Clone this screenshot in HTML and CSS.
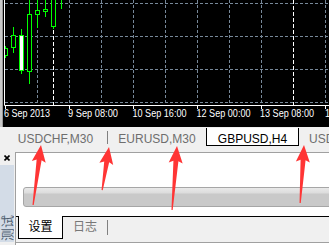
FILE: index.html
```html
<!DOCTYPE html>
<html>
<head>
<meta charset="utf-8">
<link rel="stylesheet" href="styles.css">
</head>
<body>
<div class="page">
  <div class="chart">
    <div class="chart-edge"></div>
    <svg class="chart-svg" width="325" height="127" viewBox="4 0 325 127">
      <rect x="4" y="0" width="325" height="127" fill="#000"/>
      <g stroke="#778899" stroke-width="1" stroke-dasharray="3 2" fill="none">
        <path d="M5 3.5H329M5 36.5H329M5 69.5H329M5 102.5H329"/>
        <path d="M37.5 0V105M69.5 0V105M101.5 0V105M133.5 0V105M165.5 0V105M197.5 0V105M229.5 0V105M261.5 0V105M325.5 0V105"/>
      </g>
      <g stroke="#fff" stroke-width="1" stroke-dasharray="4 2" fill="none">
        <path d="M53.5 0V105M293.5 0V105"/>
      </g>
      <g stroke="#00ff00" stroke-width="1">
        <path d="M5.5 46V58M13.5 27V53M21.5 29V74M29.5 0V84M37.5 0V28M45.5 0V17M53.5 0V29M61.5 0V9"/>
        <rect x="3.5" y="48.5" width="4" height="7" fill="#000"/>
        <rect x="11.5" y="35.5" width="4" height="12" fill="#000"/>
        <rect x="19.5" y="35.5" width="4" height="35" fill="#fff"/>
        <rect x="27.5" y="14.5" width="4" height="57" fill="#000"/>
        <rect x="35.5" y="10.5" width="4" height="4" fill="#000"/>
        <rect x="43.5" y="9.5" width="4" height="2" fill="#000"/>
        <rect x="51.5" y="-0.5" width="4" height="27" fill="#000"/>
      </g>
      <path d="M4.5 0V105.5H329" stroke="#fff" stroke-width="1" fill="none"/>
      <path d="M5.5 105V109M69.5 105V109M133.5 105V109M197.5 105V109M261.5 105V109M325.5 105V109" stroke="#fff" stroke-width="1"/>
      <g fill="#fff" font-family="Liberation Sans, Arial, sans-serif" font-size="10">
        <text x="4" y="117" textLength="46" lengthAdjust="spacingAndGlyphs">6 Sep 2013</text>
        <text x="68" y="117" textLength="50" lengthAdjust="spacingAndGlyphs">9 Sep 08:00</text>
        <text x="132.5" y="117" textLength="54" lengthAdjust="spacingAndGlyphs">10 Sep 16:00</text>
        <text x="196.5" y="117" textLength="54" lengthAdjust="spacingAndGlyphs">12 Sep 00:00</text>
        <text x="260" y="117" textLength="54" lengthAdjust="spacingAndGlyphs">13 Sep 08:00</text>
        <text x="325" y="117" textLength="54" lengthAdjust="spacingAndGlyphs">16 Sep 16:00</text>
      </g>
    </svg>
  </div>
  <div class="tabbar">
    <div class="tab t1">USDCHF,M30</div>
    <span class="sep"></span>
    <div class="tab t2">EURUSD,M30</div>
    <div class="tab active">GBPUSD,H4</div>
    <div class="tab t4">USDCHF,H1</div>
  </div>
  <div class="panel">
    <div class="side">
      <div class="close">
        <svg width="6" height="6" viewBox="0 0 6 6"><path d="M0.5 0.5L5.5 5.5M5.5 0.5L0.5 5.5" stroke="#000" stroke-width="1.6"/></svg>
      </div>
      <div class="side-tab"><span class="vtext">测试</span></div>
    </div>
    <div class="main">
      <div class="progress"></div>
      <div class="btabs">
        <div class="btab on">设置</div>
        <div class="btab">日志</div>
        <span class="bsep"></span>
      </div>
    </div>
  </div>
  <svg class="arrows" width="329" height="245" viewBox="0 0 329 245">
    <g fill="#ff3535">
      <path transform="translate(41 145) rotate(7.6)" d="M0 0L7 17L2.6 15L0.7 60.5L-0.5 60.5L-2.4 15L-7 17Z"/>
      <path transform="translate(109 147) rotate(9.2)" d="M0 0L7 17L2.6 15L0.7 43.6L-0.5 43.6L-2.4 15L-7 17Z"/>
      <path transform="translate(177 146) rotate(4.5)" d="M0 0L7 17L2.6 15L0.7 64.2L-0.5 64.2L-2.4 15L-7 17Z"/>
      <path transform="translate(304 145) rotate(3.9)" d="M0 0L7 17L2.6 15L0.7 58.1L-0.5 58.1L-2.4 15L-7 17Z"/>
    </g>
  </svg>
</div>
</body>
</html>
```

FILE: styles.css
```css
html, body {
  margin: 0;
  padding: 0;
  overflow: hidden;
}

.page {
  position: relative;
  width: 329px;
  height: 245px;
  overflow: hidden;
  background: #f0f0f0;
  font-family: "Liberation Sans", Arial, sans-serif;
}

.chart {
  display: flex;
  height: 127px;
}

.chart-edge {
  width: 4px;
  flex: none;
  background: linear-gradient(to right, #c8c8c8 0, #c8c8c8 2px, #9a9a9a 2px, #9a9a9a 3px, #000 3px);
}

.chart-svg {
  display: block;
  flex: none;
}

.tabbar {
  display: flex;
  align-items: flex-start;
  height: 25px;
  background: #f0f0f0;
  font-size: 12px;
  line-height: 14px;
  color: #6e6e6e;
  white-space: nowrap;
}

.tab {
  flex: none;
  padding-top: 5px;
  text-align: center;
}

.t1 {
  margin-left: 4px;
  width: 103px;
}

.sep {
  flex: none;
  width: 1px;
  height: 13px;
  margin-top: 4px;
  background: #808080;
}

.t2 {
  width: 98px;
}

.tab.active {
  box-sizing: border-box;
  width: 93px;
  height: 18px;
  margin-top: 1px;
  padding-top: 4px;
  background: #fff;
  color: #000;
  border: 1px solid #000;
  border-top: none;
}

.t4 {
  padding-left: 10px;
  text-align: left;
}

.panel {
  display: flex;
  height: 93px;
}

.side {
  flex: none;
  width: 15px;
  display: flex;
  flex-direction: column;
}

.close {
  height: 13px;
  padding: 3px 0 0 4px;
  box-sizing: border-box;
}

.close svg {
  display: block;
}

.side-tab {
  flex: 1;
  width: 14px;
  margin-bottom: 3px;
  background: #d3dce7;
  display: flex;
  flex-direction: column;
  justify-content: flex-end;
  overflow: hidden;
}

.vtext {
  writing-mode: vertical-rl;
  text-orientation: sideways;
  transform: rotate(180deg);
  font-family: "Noto Sans CJK SC", sans-serif;
  font-size: 13px;
  line-height: 13px;
  width: 13px;
  margin-left: 0;
  margin-bottom: 1px;
  color: #4f5f70;
}

.main {
  flex: 1;
  min-width: 0;
  border-left: 1px solid #a0a0a0;
  border-top: 1px solid #a0a0a0;
  background: #fff;
  display: flex;
  flex-direction: column;
  overflow: hidden;
}

.progress {
  flex: none;
  box-sizing: border-box;
  width: 400px;
  height: 20px;
  margin: 34px 0 0 7px;
  border: 1px solid #a6a6a6;
  border-radius: 3px 0 0 3px;
  background: linear-gradient(to bottom, #e9e9e9 0, #dcdcdc 5px, #c9c9c9 6px, #c9c9c9 100%);
}

.btabs {
  flex: none;
  box-sizing: border-box;
  display: flex;
  align-items: flex-start;
  height: 27px;
  margin-top: 9px;
  padding-left: 2px;
  background: #f0f0f0;
  border-top: 1px solid #000;
  border-bottom: 1px solid #a0a0a0;
  font-family: "Noto Sans CJK SC", sans-serif;
  font-size: 12px;
  line-height: 14px;
  color: #777;
}

.btab {
  flex: none;
  padding-top: 2px;
  margin-left: 10px;
}

.btab.on {
  box-sizing: border-box;
  width: 45px;
  height: 23px;
  margin-top: -1px;
  margin-left: 0;
  padding-top: 3px;
  text-align: center;
  background: #fff;
  color: #000;
  border: 1px solid #000;
  border-top: none;
}

.bsep {
  flex: none;
  width: 1px;
  height: 15px;
  margin: 3px 0 0 10px;
  background: #808080;
}

.arrows {
  position: absolute;
  left: 0;
  top: 0;
  pointer-events: none;
}
```
